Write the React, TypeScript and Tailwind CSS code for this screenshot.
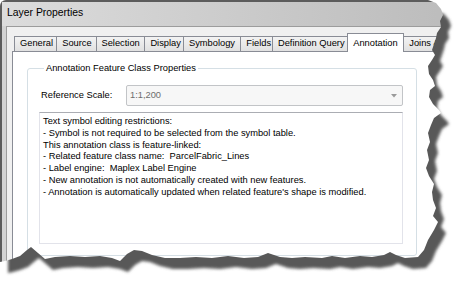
import React from "react";

const tabs: { label: string; cls: string; selected?: boolean; left?: boolean }[] = [
  { label: "General", cls: "w-[45px]" },
  { label: "Source", cls: "w-[42px]" },
  { label: "Selection", cls: "w-[52px]" },
  { label: "Display", cls: "w-[41px]" },
  { label: "Symbology", cls: "w-[61px]" },
  { label: "Fields", cls: "w-[34px]" },
  { label: "Definition Query", cls: "w-[79px]" },
  { label: "Annotation", cls: "w-[60px]", selected: true },
  { label: "Joins & Relates", cls: "w-[80px]", left: true },
];

const lines = [
  "Text symbol editing restrictions:",
  "- Symbol is not required to be selected from the symbol table.",
  "This annotation class is feature-linked:",
  "- Related feature class name:  ParcelFabric_Lines",
  "- Label engine:  Maplex Label Engine",
  "- New annotation is not automatically created with new features.",
  "- Annotation is automatically updated when related feature's shape is modified.",
];

const tear =
  "M0,0 L428,0 L436,3 L441,9 L443,15 L440,21 L441,27 L437,33 L436,38 L434,44 L432,50 L435,55 L432,60 L428,66 L429,74 L433,80 L435,86 L430,90 L429,97 L433,104 L439,110 L441,113 L434,118 L431,125 L428,133 L430,142 L427,150 L429,160 L426,168 L429,176 L434,184 L432,192 L433,200 L436,208 L433,216 L438,222 L434,230 L428,240 L424,250 L418,257 L405,258 L396,255 L390,252 L384,255 L372,257 L360,256 L345,258 L332,256 L322,258 L305,257 L292,258 L280,257 L268,253 L258,257 L244,258 L228,256 L212,258 L196,257 L180,258 L165,258 L152,255 L142,251 L134,250 L127,254 L120,261 L112,258 L100,256 L85,257 L70,256 L55,257 L45,259 L38,253 L31,247 L27,250 L20,256 L12,259 L5,261 L0,262 Z";

export default function App() {
  return (
    <div className="relative w-[469px] h-[293px] overflow-hidden bg-white font-['Liberation_Sans',Arial,sans-serif] text-black">
      <div className="w-[480px] h-[280px] flex flex-col border-t-2 border-l-2 border-[#5c5c5c] rounded-tl-[6px] bg-[#d3d3d3]">
        <div className="h-[24px] shrink-0 flex items-center pl-[5px] bg-gradient-to-r from-[#dcdcdc] to-[#bababa] text-[10.4px] leading-none">
          <span className="-mt-[1px]">Layer Properties</span>
        </div>
        <div className="flex-1 ml-[4px] flex flex-col border-t border-l border-[#9c9c9c] bg-[#f0f0f0] pl-[5px] pt-[6px]">
          <div className="h-[18px] flex items-end pl-[3px] text-[9.3px]">
            {tabs.map((t) =>
              t.selected ? (
                <div
                  key={t.label}
                  className={`${t.cls} relative z-10 -ml-px mb-[-1px] h-[19px] flex items-start justify-center pt-[3px] bg-white border border-b-0 border-[#898c95] whitespace-nowrap overflow-hidden`}
                >
                  {t.label}
                </div>
              ) : (
                <div
                  key={t.label}
                  className={`${t.cls} -ml-px h-[15px] flex items-center bg-gradient-to-b from-[#f3f3f3] to-[#e1e1e1] border border-b-0 border-[#898c95] whitespace-nowrap overflow-hidden`}
                >
                  <span className={t.left ? "pl-[5px]" : "px-[5px] w-full text-center"}>{t.label}</span>
                </div>
              )
            )}
          </div>
          <div className="flex-1 bg-white border border-[#898c95] text-[9.3px]">
            <fieldset className="ml-[14px] mt-[11px] w-[390px] h-[193px] border border-[#d5dfe5] rounded-[3px] pl-[11px]">
              <legend className="ml-[5px] px-[2px] leading-[11px]">Annotation Feature Class Properties</legend>
              <div className="mt-[11px] flex items-center">
                <div className="w-[87px] pl-[2px]">Reference Scale:</div>
                <div className="w-[277px] h-[21px] flex items-center justify-between border border-[#c2c4c7] rounded-[2px] bg-[#f7f7f7] pl-[3px] pr-[5px] text-[#6d6d6d]">
                  <span>1:1,200</span>
                  <svg width="6" height="4" viewBox="0 0 6 4">
                    <path d="M0,0 L6,0 L3,3.5 Z" fill="#9a9a9a" />
                  </svg>
                </div>
              </div>
              <div className="mt-[6px] w-[364px] h-[132px] border border-[#e2e3ea] border-t-[#abadb3] pl-[3px] pt-[3px] leading-[11.8px]">
                {lines.map((l) => (
                  <div key={l} className="whitespace-pre">
                    {l}
                  </div>
                ))}
              </div>
            </fieldset>
          </div>
        </div>
      </div>
      <svg className="absolute inset-0 pointer-events-none" width="469" height="293" viewBox="0 0 469 293">
        <defs>
          <mask id="outside">
            <rect x="0" y="0" width="469" height="293" fill="white" />
            <path d={tear} fill="black" />
          </mask>
          <filter id="blur" x="-10%" y="-10%" width="120%" height="120%">
            <feGaussianBlur stdDeviation="1.5" />
          </filter>
        </defs>
        <g mask="url(#outside)">
          <rect x="0" y="0" width="469" height="293" fill="white" />
          <path d={tear} transform="translate(8,11)" fill="#595959" filter="url(#blur)" />
        </g>
      </svg>
    </div>
  );
}
